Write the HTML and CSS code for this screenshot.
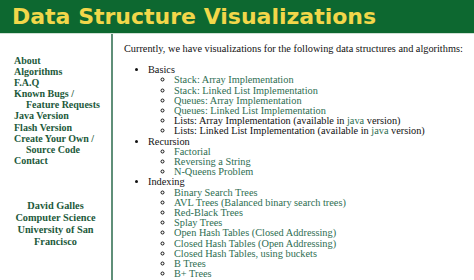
FILE: index.html
```html
<!DOCTYPE html>
<html>
<head>
<meta charset="utf-8">
<link rel="stylesheet" href="styles.css">
</head>
<body>
<div class="header"><h1 class="title">Data Structure Visualizations</h1></div>
<div class="page">
  <div class="sidebar">
    <div class="nav">
      <a href="#">About</a>
      <a href="#">Algorithms</a>
      <a href="#">F.A.Q</a>
      <a href="#">Known Bugs /<br><span class="indent">Feature Requests</span></a>
      <a href="#">Java Version</a>
      <a href="#">Flash Version</a>
      <a href="#">Create Your Own /<br><span class="indent">Source Code</span></a>
      <a href="#">Contact</a>
    </div>
    <div class="author">David Galles<br>Computer Science<br>University of San<br>Francisco</div>
  </div>
  <div class="main">
    <p class="intro">Currently, we have visualizations for the following data structures and algorithms:</p>
    <ul class="list">
      <li>Basics
        <ul class="sub">
          <li><a href="#">Stack: Array Implementation</a></li>
          <li><a href="#">Stack: Linked List Implementation</a></li>
          <li><a href="#">Queues: Array Implementation</a></li>
          <li><a href="#">Queues: Linked List Implementation</a></li>
          <li>Lists: Array Implementation (available in <a href="#">java</a> version)</li>
          <li>Lists: Linked List Implementation (available in <a href="#">java</a> version)</li>
        </ul>
      </li>
      <li>Recursion
        <ul class="sub">
          <li><a href="#">Factorial</a></li>
          <li><a href="#">Reversing a String</a></li>
          <li><a href="#">N-Queens Problem</a></li>
        </ul>
      </li>
      <li>Indexing
        <ul class="sub">
          <li><a href="#">Binary Search Trees</a></li>
          <li><a href="#">AVL Trees (Balanced binary search trees)</a></li>
          <li><a href="#">Red-Black Trees</a></li>
          <li><a href="#">Splay Trees</a></li>
          <li><a href="#">Open Hash Tables (Closed Addressing)</a></li>
          <li><a href="#">Closed Hash Tables (Open Addressing)</a></li>
          <li><a href="#">Closed Hash Tables, using buckets</a></li>
          <li><a href="#">B Trees</a></li>
          <li><a href="#">B+ Trees</a></li>
        </ul>
      </li>
    </ul>
  </div>
</div>
</body>
</html>
```
FILE: styles.css
```css
html, body {
  margin: 0;
  padding: 0;
  background: #ffffff;
  height: 100%;
  overflow: hidden;
}
.header {
  background: #0d6830;
  height: 33px;
  display: flex;
  align-items: center;
  padding-left: 12px;
  border-bottom: 1px solid #cfe0d4;
}
.title {
  margin: 0;
  font-family: "DejaVu Sans", Verdana, sans-serif;
  font-weight: bold;
  font-size: 22px;
  color: #f2d74a;
}
.page {
  display: flex;
  height: 246px;
}
.sidebar {
  width: 113px;
  border-right: 2px solid #5f8f78;
  padding-top: 21px;
  font-family: "Liberation Serif", "Times New Roman", serif;
  font-weight: bold;
  font-size: 10px;
  line-height: 11.1px;
  color: #1d5a3b;
  box-sizing: border-box;
}
.nav {
  display: flex;
  flex-direction: column;
  padding-left: 14px;
}
.nav a {
  color: #1d5a3b;
  text-decoration: none;
}
.indent {
  padding-left: 12px;
}
.author {
  margin-top: 34px;
  text-align: center;
  font-size: 10.3px;
  line-height: 12px;
}
.main {
  flex: 1;
  padding-left: 11px;
  font-family: "Liberation Serif", "Times New Roman", serif;
  font-size: 10.3px;
  line-height: 10.2px;
  color: #111;
}
.intro {
  margin: 10px 0 11px 0;
}
.list {
  margin: 0;
  padding-left: 24px;
  list-style: disc;
}
.sub {
  margin: 0;
  padding-left: 26px;
  list-style: circle;
}
.main a {
  color: #2e6e52;
  text-decoration: none;
}
```
